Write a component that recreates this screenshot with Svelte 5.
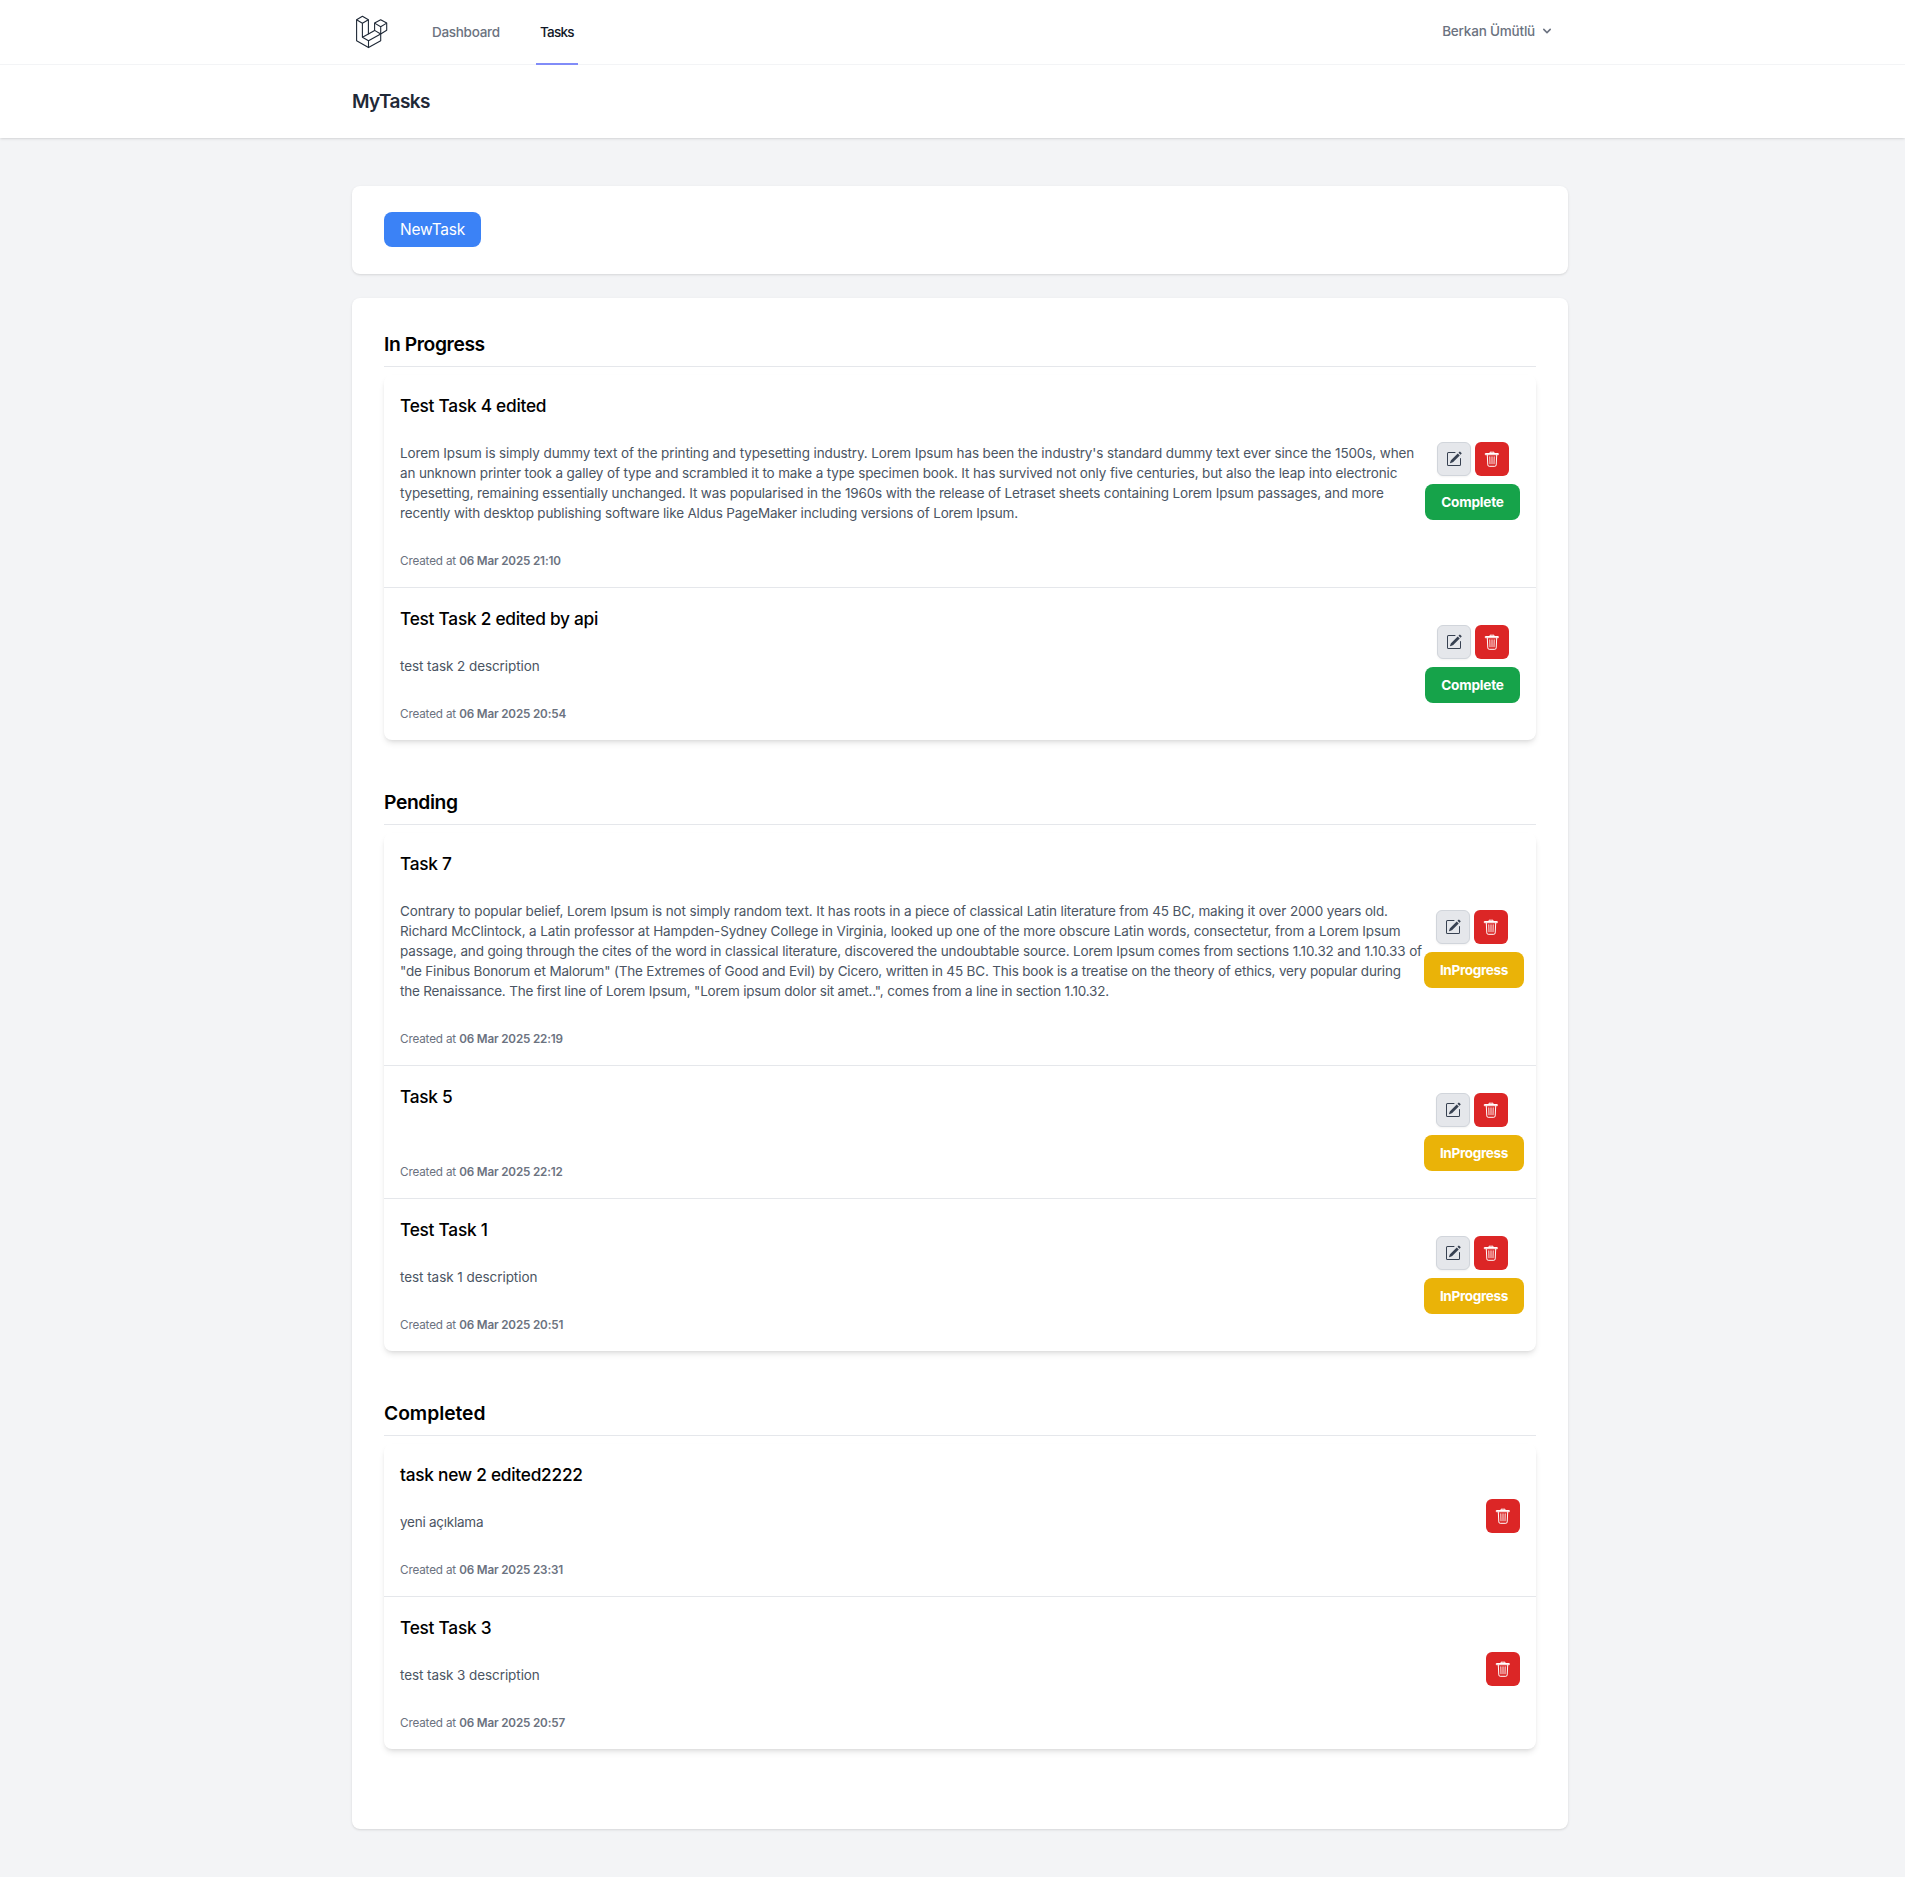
<script>
  // tracking is the letter spacing, in pixels, of a line or heading
  const groups = [
    {
      name: 'In Progress',
      tracking: -0.41,
      action: 'Complete',
      tasks: [
        {
          title: 'Test Task 4 edited',
          lines: [
            { tracking: -0.119, text: "Lorem Ipsum is simply dummy text of the printing and typesetting industry. Lorem Ipsum has been the industry's standard dummy text ever since the 1500s, when" },
            { tracking: -0.142, text: 'an unknown printer took a galley of type and scrambled it to make a type specimen book. It has survived not only five centuries, but also the leap into electronic' },
            { tracking: -0.155, text: 'typesetting, remaining essentially unchanged. It was popularised in the 1960s with the release of Letraset sheets containing Lorem Ipsum passages, and more' },
            { tracking: -0.168, text: 'recently with desktop publishing software like Aldus PageMaker including versions of Lorem Ipsum.' }
          ],
          created: '06 Mar 2025 21:10'
        },
        { title: 'Test Task 2 edited by api', lines: [{ tracking: -0.08, text: 'test task 2 description' }], created: '06 Mar 2025 20:54' }
      ]
    },
    {
      name: 'Pending',
      tracking: -0.4,
      action: 'InProgress',
      tasks: [
        {
          title: 'Task 7',
          lines: [
            { tracking: -0.135, text: 'Contrary to popular belief, Lorem Ipsum is not simply random text. It has roots in a piece of classical Latin literature from 45 BC, making it over 2000 years old.' },
            { tracking: -0.127, text: 'Richard McClintock, a Latin professor at Hampden-Sydney College in Virginia, looked up one of the more obscure Latin words, consectetur, from a Lorem Ipsum' },
            { tracking: -0.141, text: 'passage, and going through the cites of the word in classical literature, discovered the undoubtable source. Lorem Ipsum comes from sections 1.10.32 and 1.10.33 of' },
            { tracking: -0.177, text: '"de Finibus Bonorum et Malorum" (The Extremes of Good and Evil) by Cicero, written in 45 BC. This book is a treatise on the theory of ethics, very popular during' },
            { tracking: -0.187, text: 'the Renaissance. The first line of Lorem Ipsum, "Lorem ipsum dolor sit amet..", comes from a line in section 1.10.32.' }
          ],
          created: '06 Mar 2025 22:19'
        },
        { title: 'Task 5', lines: [], created: '06 Mar 2025 22:12' },
        { title: 'Test Task 1', lines: [{ tracking: -0.06, text: 'test task 1 description' }], created: '06 Mar 2025 20:51' }
      ]
    },
    {
      name: 'Completed',
      tracking: -0.05,
      action: '',
      tasks: [
        { title: 'task new 2 edited2222', lines: [{ tracking: -0.25, text: 'yeni açıklama' }], created: '06 Mar 2025 23:31' },
        { title: 'Test Task 3', lines: [{ tracking: -0.08, text: 'test task 3 description' }], created: '06 Mar 2025 20:57' }
      ]
    }
  ];
</script>

<nav>
  <div class="container bar">
    <svg class="logo" viewBox="0 0 32 34" fill="none" stroke="#1f2937" stroke-width="1.1" stroke-linejoin="round">
      <path d="M.6 4.7 6.4 1.2l6 3.5V19l6.2-3.6V8.1l6.1-3.4 6 3.4v7.2L24.7 19v6.7l-12.2 6.9L.6 25.7z" />
      <path d="M.6 4.7l5.8 3.5 6-3.5M6.4 8.2v14.1l6.1 3.4L24.7 19l-6.1-3.6M6.4 22.3l6-3.3M12.5 25.7v6.9M18.6 8.1l6.1 3.6 6-3.6M24.7 11.7V19" />
    </svg>
    <div class="links">
      <a class="dash" href="#dashboard">Dashboard</a>
      <a class="active" href="#tasks">Tasks</a>
    </div>
    <button class="user">
      <span>Berkan Ümütlü</span>
      <svg viewBox="0 0 20 20" fill="currentColor"><path fill-rule="evenodd" d="M5.293 7.293a1 1 0 011.414 0L10 10.586l3.293-3.293a1 1 0 111.414 1.414l-4 4a1 1 0 01-1.414 0l-4-4a1 1 0 010-1.414z" clip-rule="evenodd" /></svg>
    </button>
  </div>
</nav>
<header>
  <div class="container"><h1>MyTasks</h1></div>
</header>
<main class="container">
  <section class="panel tools"><button class="new">NewTask</button></section>
  <section class="panel board">
    {#each groups as group}
      <div class="group">
        <h2><span style:letter-spacing="{group.tracking}px">{group.name}</span></h2>
        <ul>
          {#each group.tasks as task}
            <li>
              <div class="body">
                <h3>{task.title}</h3>
                <p class="desc">{#each task.lines as line}<span style:letter-spacing="{line.tracking}px">{line.text}</span>{/each}</p>
                <p class="created"><small>Created at <b>{task.created}</b></small></p>
              </div>
              <div class="actions" class:complete={group.action === 'Complete'} class:progress={group.action === 'InProgress'}>
                <div class="pair">
                  {#if group.action}
                    <button class="icon edit" aria-label="Edit">
                      <svg viewBox="0 0 16 16" fill="currentColor"><path d="M15.502 1.94a.5.5 0 0 1 0 .706L14.459 3.69l-2-2L13.502.646a.5.5 0 0 1 .707 0l1.293 1.293zm-1.75 2.456-2-2L4.939 9.21a.5.5 0 0 0-.121.196l-.805 2.414a.25.25 0 0 0 .316.316l2.414-.805a.5.5 0 0 0 .196-.12l6.813-6.814z" /><path fill-rule="evenodd" d="M1 13.5A1.5 1.5 0 0 0 2.5 15h11a1.5 1.5 0 0 0 1.5-1.5v-6a.5.5 0 0 0-1 0v6a.5.5 0 0 1-.5.5h-11a.5.5 0 0 1-.5-.5v-11a.5.5 0 0 1 .5-.5H9a.5.5 0 0 0 0-1H2.5A1.5 1.5 0 0 0 1 2.5z" /></svg>
                    </button>
                  {/if}
                  <button class="icon delete" aria-label="Delete">
                    <svg viewBox="0 0 16 16" fill="none" stroke="currentColor" stroke-linecap="round" stroke-linejoin="round">
                      <path d="M1.7 2.5h12.6v1.2H1.7zM6 2.3V1.2h4v1.1M3.3 4l.5 9.9q.1 1.4 1.4 1.4h5.6q1.3 0 1.4-1.4l.5-9.9" />
                      <path stroke-width=".9" d="M5.8 5.8l.2 7M8 5.8v7M10.2 5.8l-.2 7" />
                    </svg>
                  </button>
                </div>
                {#if group.action}<button class="state">{group.action}</button>{/if}
              </div>
            </li>
          {/each}
        </ul>
      </div>
    {/each}
  </section>
</main>

<style>
  :global(body) { margin: 0; background: #f3f4f6; overflow: hidden; }
  :global(#app) { font-family: Inter, "Liberation Sans", sans-serif; font-size: 16px; line-height: 24px; color: #000; }
  h1, h2, h3, p, ul { margin: 0; padding: 0; font-weight: inherit; }
  button { font-family: inherit; border: 0; margin: 0; padding: 0; }
  svg { display: block; }
  .container { width: 1216px; margin-left: 352px; }
  nav { background: #fff; border-bottom: 1px solid #f3f4f6; height: 64px; }
  .bar { display: flex; height: 65px; }
  .logo { width: 32px; height: 34px; margin: 15px 0 0 4px; }
  .links { display: flex; gap: 32px; margin-left: 40px; }
  .links a { box-sizing: border-box; height: 65px; padding: 1px 4px 0; border-bottom: 2px solid transparent; display: flex; align-items: center; font-size: 13.5px; font-weight: 450; color: #6b7280; text-decoration: none; letter-spacing: -0.3px; white-space: nowrap; }
  .links a.dash { width: 76px; }
  .links a.active { position: relative; width: 42px; color: #111827; border-color: #818cf8; letter-spacing: -0.75px; }
  .user { margin-left: auto; margin-right: 13px; display: flex; align-items: center; gap: 4px; background: none; color: #6b7280; font-size: 13.5px; font-weight: 450; letter-spacing: -0.2px; height: 62px; }
  .user svg { width: 16px; height: 16px; }
  header { position: relative; background: #fff; padding: 24px 0; box-shadow: 0 1px 3px rgb(0 0 0 / .1), 0 1px 2px -1px rgb(0 0 0 / .1); }
  nav { position: relative; z-index: 1; }
  h1 { font-size: 19px; height: 25px; line-height: 25px; font-weight: 600; color: #1f2937; letter-spacing: -0.6px; }
  main { padding: 48px 0; }
  .panel { background: #fff; border-radius: 8px; box-shadow: 0 1px 3px rgb(0 0 0 / .1), 0 1px 2px -1px rgb(0 0 0 / .1); }
  .tools { padding: 26px 32px 27px; margin-bottom: 24px; }
  .new { display: block; width: 97px; height: 35px; padding-bottom: 1px; background: #3b82f6; color: #fff; border-radius: 8px; font-size: 15.5px; letter-spacing: -0.25px; }
  .board { padding: 32px; }
  .group { margin-bottom: 48px; }
  h2 { font-size: 19.3px; height: 28px; line-height: 29px; font-weight: 580; padding-bottom: 8px; border-bottom: 1px solid #e5e7eb; margin-bottom: 8px; }
  ul { list-style: none; border-radius: 8px; box-shadow: 0 4px 6px -1px rgb(0 0 0 / .1), 0 2px 4px -2px rgb(0 0 0 / .1); }
  li { padding: 16px; display: flex; align-items: center; }
  li + li { border-top: 1px solid #e5e7eb; }
  .body { flex: 1; min-width: 0; display: flex; flex-direction: column; gap: 24px; }
  h3 { font-size: 17.3px; height: 28px; line-height: 29px; font-weight: 460; letter-spacing: -0.26px; }
  .desc { font-size: 13.5px; line-height: 20px; color: #4b5563; }
  .desc span { display: block; white-space: nowrap; }
  .created { height: 24px; color: #6b7280; }
  .created small { font-size: 11.7px; letter-spacing: -0.16px; }
  .created b { font-weight: 570; }
  .actions { display: flex; flex-direction: column; align-items: center; }
  .actions.complete { width: 95px; }
  .actions.progress { width: 96px; }
  .pair { display: flex; gap: 4px; margin-bottom: 8px; }
  .icon { width: 34px; height: 34px; border-radius: 6px; display: grid; place-items: center; box-sizing: border-box; }
  .icon svg { width: 16px; height: 16px; }
  .icon.edit { background: #e5e7eb; border: 1px solid #d1d5db; color: #374151; box-shadow: 0 1px 2px rgb(0 0 0 / .05); }
  .icon.delete { background: #dc2626; color: #fff; }
  .state { width: 95px; height: 36px; padding-bottom: 1px; border-radius: 8px; background: #16a34a; color: #fff; font-size: 13.6px; font-weight: 650; letter-spacing: -0.2px; align-self: flex-start; }
  .progress .state { width: 100px; background: #eab308; letter-spacing: -0.35px; }
</style>
